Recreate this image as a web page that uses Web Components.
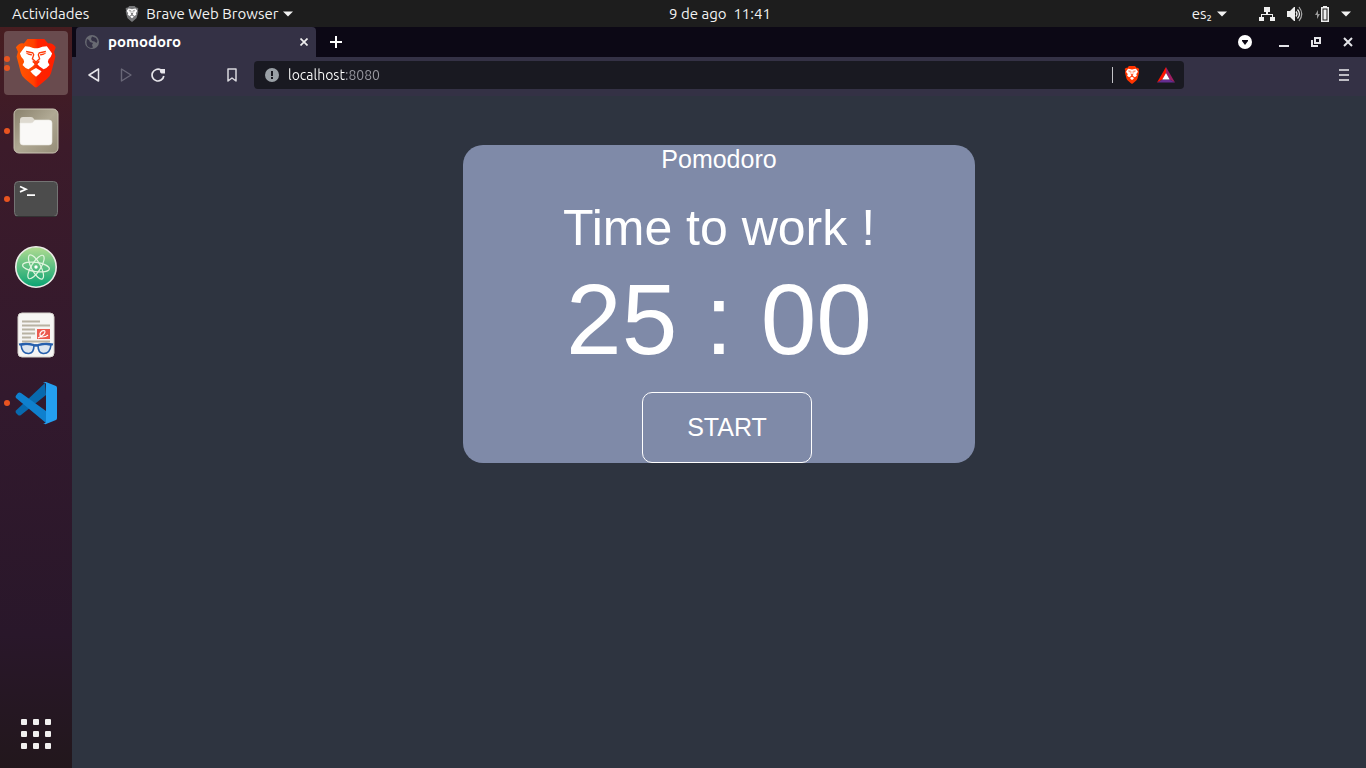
<!DOCTYPE html>
<html lang="es">
<head>
<meta charset="utf-8">
<title>pomodoro</title>
<style>
  html, body { height: 100%; margin: 0; }
  body { background: #2e3440; overflow: hidden; }
</style>
</head>
<body>
<desk-top></desk-top>
<script>
const define = (name, markup, setup) => {
  const template = document.createElement('template');
  template.innerHTML = '<style>*{box-sizing:border-box}button{appearance:none;border:0;background:none;padding:0;margin:0;color:inherit;font:inherit;display:inline-flex;align-items:center;justify-content:center}</style>' + markup;
  customElements.define(name, class extends HTMLElement {
    constructor() {
      super();
      this.attachShadow({ mode: 'open' }).append(template.content.cloneNode(true));
    }
    connectedCallback() { if (setup) setup(this, this.shadowRoot); }
  });
};

/* Lion head, drawn once and tinted per use */
const lion = (shield, line) => `
  <path fill="${shield}" d="M83 33H134L146 47C153 44 162 49 169 58L164 72L168 86L155 136Q152 148 142 155L113 179Q109 182 105 179L76 155Q66 148 63 136L50 86L54 72L48 58C56 47 64 44 72 47Z"/>
  <path fill="#fff" d="M76 55Q92 56 100 60Q109 63 118 60Q126 56 142 55L158 77Q155 88 147 95L145 103L150 112Q143 121 132 125L120 117Q114 111 113 109L121 102H97L105 109Q103 112 98 117L86 125Q75 121 68 112L73 103L71 95Q63 88 60 77Z"/>
  <path fill="#fff" d="M109 121L126 131Q118 142 109 148Q100 142 92 131Z"/>
  <path fill="none" stroke="${line}" stroke-width="4" d="M79 71L99 75L102 81L98 93L109 103L120 93L116 81L119 75L139 71"/>
  <path fill="${line}" d="M77 75L97 79L96 83Q86 84 77 75ZM141 75L121 79L122 83Q132 84 141 75ZM97 98L109 103L121 98L113 109L109 112L105 109Z"/>`;

/* name: [width, height, viewBox, body] */
const icons = {
  brave: [42, 49, '47 33 124 149', `<defs><linearGradient id="g"><stop offset="0" stop-color="#ff5a00"/><stop offset=".45" stop-color="#ff4000"/><stop offset=".55" stop-color="#ff2200"/><stop offset="1" stop-color="#ff2000"/></linearGradient></defs>${lion('url(#g)', '#ff3a08')}`],
  braveSmall: [16, 18, '46 32 126 150', lion('#ff3500', '#ff4b18')],
  braveGrey: [14, 16, '46 32 126 150', lion('#77787a', '#666')],
  files: [46, 46, '0 0 46 46', `<defs><linearGradient id="f" x2="1" y2="1"><stop stop-color="#88806b"/><stop offset=".5" stop-color="#b0a994"/><stop offset="1" stop-color="#958d78"/></linearGradient></defs><rect x="1" y="1" width="44" height="44" rx="5" fill="url(#f)" stroke="#c9c3b2"/><path fill="#dedad0" d="M7 33V12q0-3 3-3h8q2 0 3 2l1 1h13q3 0 3 3v5z"/><path fill="#faf9f7" stroke="#e9e7e1" stroke-width=".6" d="M7 15h11q2 0 3-2l1-1h14q3 0 3 3v19q0 3-3 3H10q-3 0-3-3z"/>`],
  terminal: [46, 38, '0 0 46 38', `<rect x="1.5" y="1.5" width="43" height="35" rx="4" fill="#4c4c4c" stroke="#747474"/><path stroke="#333" d="M3 36.500h40"/><path fill="none" stroke="#fff" stroke-width="1.700" d="M7 6.500l6 2.700-6 2.700M14 15.200h8"/>`],
  atom: [44, 44, '0 0 44 44', `<defs><linearGradient id="a" x2="0" y2="1"><stop stop-color="#b1dc91"/><stop offset="1" stop-color="#08a373"/></linearGradient></defs><circle cx="22" cy="22" r="20.200" fill="url(#a)" stroke="#ecece8" stroke-width="1.600"/><g fill="none" stroke="#e0f5de" stroke-width="1.200"><ellipse cx="22" cy="22" rx="13.500" ry="4.600" transform="rotate(8 22 22)"/><ellipse cx="22" cy="22" rx="13.500" ry="4.600" transform="rotate(62 22 22)"/><ellipse cx="22" cy="22" rx="13.500" ry="4.600" transform="rotate(122 22 22)"/></g><circle cx="22" cy="22" r="1.700" fill="#fff"/>`],
  reader: [38, 46, '0 0 38 46', `<rect x="1" y="1" width="36" height="44" rx="4" fill="#f6f5f3" stroke="#d5d2cc"/><path stroke="#b8b2a2" stroke-width="1.800" d="M5 9.500h18M5 13.500h28M5 17.500h13M5 21.500h13M5 25.500h9M5 29.500h28"/><path fill="#ec5a4f" d="M20 17h13v10H20z"/><path fill="none" stroke="#fff" stroke-width="1.100" d="M21 26q3-1 6-4 2-3 0-3.500-3 0-4 3-.5 3 2 3.500 4 0 6-2"/><g fill="#dce5ef" stroke="#255fad" stroke-width="1.600"><path d="M4 33q6-1.500 13 0 0 8-5 8.500-7 .5-8-8.500zM34 33q-6-1.500-13 0 0 8 5 8.500 7 .5 8-8.500z"/><path fill="none" stroke-width="2.200" d="M17 34q2-1.500 4 0M2 32.500q8-1.500 15 .5M36 32.500q-8-1.500-15 .5"/></g>`],
  code: [44, 44, '0 0 44 44', `<path fill="#0869ae" d="M2 29.500L31 2l1 12L7 34q-1.500 1-3 0l-2-2q-1-1.200 0-2.500z"/><path fill="#0f80ce" d="M2 14.500L4 12q1.500-1.200 3 0l25 18v12L2 17q-1-1.300 0-2.500z"/><path fill="#249ff0" d="M32 1l10 4q1 .5 1 2v30q0 1.500-1 2l-10 4q-1.500.5-3-1 2.500 1 3-1V3q-.5-2-3-1 1.500-1.500 3-1z"/>`],
  apps: [32, 32, '0 0 32 32', [1, 13, 25].map(y => [1, 13, 25].map(x => `<rect x="${x}" y="${y}" width="6" height="6" rx="1" fill="#f2f1f0"/>`).join('')).join('')],
  caret: [10, 6, '0 0 10 6', `<path fill="#f2f2f2" d="M0 .5h10L5 5.500z"/>`],
  network: [16, 14, '0 0 16 14', `<path fill="#eee" d="M5 0h6v5H9v2h5v3h2v4h-5v-4h2V8H3v2h2v4H0v-4h2V7h5V5H5z"/>`],
  volume: [16, 16, '0 0 16 16', `<path fill="#eee" d="M0 5h3l4-4h1v14H7l-4-4H0z"/><path fill="none" stroke="#eee" stroke-width="1.300" d="M9 5.500q2 2.500 0 5M10.500 3.500q4 4.500 0 9"/><path fill="none" stroke="#aaa" stroke-width="1.200" d="M12 1q5.500 7 0 14"/>`],
  battery: [14, 16, '0 0 14 16', `<path fill="#999" d="M3 4L0 9h2v4l3-5H3z"/><path fill="#eee" d="M8 0h4v1h2v15H6V1h2zM7.500 2.500v12h5v-12zM8.500 3.500h3v10h-3z" fill-rule="evenodd"/>`],
  globe: [14, 14, '0 0 14 14', `<circle cx="7" cy="7" r="7" fill="#686a72"/><path fill="#343145" d="M2 4l2 1 1 2 3 1-1 2 1 2.500-2 .5Q1 12 1.500 7zM7 1.500l4 1.500 1.500 3-1 2-2-1.500L7 6 6 4z"/>`],
  close: [8, 8, '0 0 8 8', `<path fill="none" stroke="#eee" stroke-width="1.700" d="M.5.5l7 7M7.500.5l-7 7"/>`],
  closeBig: [10, 10, '0 0 10 10', `<path fill="none" stroke="#e4e4e8" stroke-width="2" d="M1 1l8 8M9 1l-8 8"/>`],
  plus: [12, 12, '0 0 12 12', `<path fill="#fff" d="M5 0h2v5h5v2H7v5H5V7H0V5h5z"/>`],
  menuDot: [14, 14, '0 0 14 14', `<circle cx="7" cy="7" r="7" fill="#fff"/><path fill="#0c0815" d="M4 5h6v1L7 10 4 6z"/>`],
  minimize: [10, 10, '0 0 10 10', `<path fill="#e4e4e8" d="M0 8h10v2H0z"/>`],
  restore: [10, 10, '0 0 10 10', `<path fill="#e4e4e8" fill-rule="evenodd" d="M3 0h7v7H3zM5 2v3h3V2zM0 3h2v5h5v2H0z"/>`],
  back: [12, 14, '0 0 12 14', `<path fill="none" stroke="#e6e5ea" stroke-width="1.500" stroke-linejoin="round" d="M10.500 1v12L1 7z"/>`],
  forward: [12, 14, '0 0 12 14', `<path fill="none" stroke="#696777" stroke-width="1.400" stroke-linejoin="round" d="M1.500 1v12L11 7z"/>`],
  reload: [14, 14, '0 0 14 14', `<path fill="none" stroke="#e6e5ea" stroke-width="1.700" d="M12.800 8A5.900 5.900 0 1 1 10 2"/><path fill="#e6e5ea" d="M9 1h5v4.500H10.500Q9 5 9 3.500z"/>`],
  bookmark: [10, 14, '0 0 10 14', `<path fill="none" stroke="#d8d7dd" stroke-width="1.500" stroke-linejoin="round" d="M1 1h8v12L5 10l-4 3z"/>`],
  info: [14, 14, '0 0 14 14', `<circle cx="7" cy="7" r="7" fill="#9aa0a6"/><path fill="#191921" d="M6 3h2v5H6zM6 9h2v2H6z"/>`],
  rewards: [18, 16, '0 0 18 16', `<path fill="#ff1500" d="M9 0L0 15.500 5.500 12.500 9 6z"/><path fill="#9e1f63" d="M9 0l9 15.500-5.500-3L9 6z"/><path fill="#662d91" d="M0 15.500h18l-5.500-3h-7z"/><path fill="#fff" d="M9 6l3.700 6.500H5.300z"/>`],
  menu: [10, 12, '0 0 10 12', `<path fill="#bfbec5" d="M0 0h10v2H0zM0 5h10v2H0zM0 10h10v2H0z"/>`],
};
define('ui-icon', '<style>:host{display:inline-flex;flex:none}svg{display:block}</style><span id="art"></span>', (host, root) => {
  const [w, h, box, body] = icons[host.getAttribute('name')];
  root.getElementById('art').innerHTML = `<svg width="${w}" height="${h}" viewBox="${box}" aria-hidden="true">${body}</svg>`;
});

define('top-bar', `
<style>
  :host { display: grid; grid-template-columns: 1fr auto 1fr; align-items: center; height: 27px; background: #1d1d1d; color: #f2f2f2; font: 15px/20px Ubuntu, "Noto Sans", sans-serif; }
  .left, .right { display: flex; align-items: center; }
  .left { padding-left: 12px; gap: 36px; }
  .app { gap: 5px; }
  .app ui-icon:first-child { margin-right: 2px; }
  .clock { padding-left: 74px; white-space: pre; }
  .right { justify-content: flex-end; padding-right: 15px; gap: 12px; }
  .lang { gap: 5px; margin-right: 20px; }
  .system { gap: 12px; }
</style>
<div class="left"><button>Actividades</button><button class="app"><ui-icon name="braveGrey"></ui-icon>Brave Web Browser<ui-icon name="caret"></ui-icon></button></div>
<button class="clock">9 de ago  11:41</button>
<div class="right"><button class="lang">es₂<ui-icon name="caret"></ui-icon></button><button class="system" aria-label="Sistema"><ui-icon name="network"></ui-icon><ui-icon name="volume"></ui-icon><ui-icon name="battery"></ui-icon><ui-icon name="caret"></ui-icon></button></div>`);

define('dock-item', `
<style>
  :host { display: block; position: relative; }
  button { width: 64px; height: 64px; border-radius: 4px; }
  :host([active]) button { background: #694b4e; }
  .dots { position: absolute; left: 0; top: 0; height: 64px; display: flex; flex-direction: column; justify-content: center; gap: 3px; }
  .dots i { width: 6px; height: 6px; border-radius: 50%; background: #e95420; }
</style>
<button></button><div class="dots"></div>`, (host, root) => {
  const icon = document.createElement('ui-icon');
  icon.setAttribute('name', host.getAttribute('icon'));
  root.querySelector('button').replaceChildren(icon);
  root.querySelector('button').setAttribute('aria-label', host.getAttribute('label'));
  root.querySelector('.dots').innerHTML = '<i></i>'.repeat(+host.getAttribute('windows') || 0);
});

define('app-dock', `
<style>
  :host { display: flex; flex-direction: column; gap: 4px; padding: 4px 4px 2px; background: linear-gradient(#471d20, #3c1b2a 16%, #32192d 50%, #29172a 82%, #22171c); }
  dock-item:last-child { margin-top: auto; }
</style>
<dock-item icon="brave" label="Brave" windows="2" active></dock-item>
<dock-item icon="files" label="Archivos" windows="1"></dock-item>
<dock-item icon="terminal" label="Terminal" windows="1"></dock-item>
<dock-item icon="atom" label="Atom"></dock-item>
<dock-item icon="reader" label="Visor de documentos"></dock-item>
<dock-item icon="code" label="Visual Studio Code" windows="1"></dock-item>
<dock-item icon="apps" label="Mostrar aplicaciones"></dock-item>`);

define('tab-strip', `
<style>
  :host { display: flex; height: 30px; padding: 0 2px 0 4px; background: #0c0815; color: #fff; font: 15px/20px Ubuntu, "Noto Sans", sans-serif; }
  .tab { display: flex; align-items: center; width: 240px; padding: 0 8px 0 9px; gap: 9px; border-radius: 4px 4px 0 0; background: #343145; font-weight: 600; }
  .tab span { flex: 1; }
  .tab button { width: 8px; height: 20px; }
  .new { width: 40px; }
  .controls { display: flex; margin-left: auto; }
  .controls button { width: 32px; }
  .controls button:first-child { margin-right: 7px; }
</style>
<div class="tab"><ui-icon name="globe"></ui-icon><span>pomodoro</span><button aria-label="Cerrar pestaña"><ui-icon name="close"></ui-icon></button></div>
<button class="new" aria-label="Nueva pestaña"><ui-icon name="plus"></ui-icon></button>
<div class="controls"><button aria-label="Buscar pestañas"><ui-icon name="menuDot"></ui-icon></button><button aria-label="Minimizar"><ui-icon name="minimize"></ui-icon></button><button aria-label="Restaurar"><ui-icon name="restore"></ui-icon></button><button aria-label="Cerrar"><ui-icon name="closeBig"></ui-icon></button></div>`);

define('nav-bar', `
<style>
  :host { display: grid; grid-template-columns: 182px 1fr 182px; align-items: center; height: 39px; padding-bottom: 3px; background: #343145; font: 14px/20px Ubuntu, "Noto Sans", sans-serif; }
  .nav { display: flex; padding: 0 6px; }
  button { width: 32px; height: 28px; }
  .nav button:last-child { margin-left: auto; }
  .address { display: flex; align-items: center; height: 28px; padding: 0 1px 0 11px; border-radius: 4px; background: #191921; }
  input { flex: 1; min-width: 0; margin: 0 0 0 9px; padding: 0; border: 0; outline: 0; font: inherit; color: transparent; background: linear-gradient(90deg, #fff 58px, #9a9aa2 58px); -webkit-background-clip: text; background-clip: text; }
  .rule { width: 1px; height: 16px; margin-right: 2px; background: #c4c4c8; }
  .address button { width: 34px; }
  .more { justify-self: end; margin-right: 6px; }
</style>
<div class="nav"><button aria-label="Atrás"><ui-icon name="back"></ui-icon></button><button aria-label="Adelante"><ui-icon name="forward"></ui-icon></button><button aria-label="Recargar"><ui-icon name="reload"></ui-icon></button><button aria-label="Marcador"><ui-icon name="bookmark"></ui-icon></button></div>
<div class="address"><ui-icon name="info"></ui-icon><input aria-label="Dirección" value="localhost:8080" spellcheck="false"><span class="rule"></span><button aria-label="Shields"><ui-icon name="braveSmall"></ui-icon></button><button aria-label="Rewards"><ui-icon name="rewards"></ui-icon></button></div>
<button class="more" aria-label="Menú"><ui-icon name="menu"></ui-icon></button>`);

define('pomodoro-card', `
<style>
  :host { display: flex; flex-direction: column; align-items: center; width: 512px; max-width: 100%; border-radius: 20px; background: #7f8aa8; color: #fff; font: 25px/28px "Liberation Sans", Arial, sans-serif; }
  h1, h2, p { margin: 0; font-weight: 400; }
  h1 { font-size: 25px; }
  h2 { margin-top: 26px; font-size: 50px; line-height: 58px; }
  p { margin-top: 4px; font-size: 100px; line-height: 116px; }
  button { width: 170px; height: 71px; margin: 15px 0 0 16px; padding-bottom: 2px; border: 1px solid #fff; border-radius: 10px; }
</style>
<h1>Pomodoro</h1><h2>Time to work !</h2><p role="timer">25 : 00</p><button>START</button>`);

define('desk-top', `
<style>
  :host { display: grid; grid-template: auto 1fr / 72px 1fr; min-height: 100vh; }
  top-bar { grid-column: 1 / -1; }
  .window { display: flex; flex-direction: column; }
  main { flex: 1; display: flex; justify-content: center; align-items: flex-start; padding-top: 49px; background: #2e3440; }
</style>
<top-bar></top-bar><app-dock></app-dock>
<div class="window"><tab-strip></tab-strip><nav-bar></nav-bar><main><pomodoro-card></pomodoro-card></main></div>`);
</script>
</body>
</html>
